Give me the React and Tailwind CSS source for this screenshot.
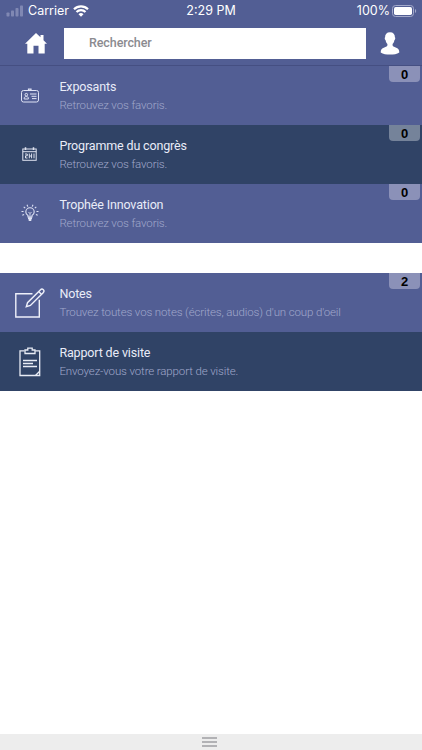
import React from 'react';

const BadgeIcon = () => (
  <svg className="w-[20px] h-[16px]" viewBox="0 0 20 16" fill="none" stroke="#dfe3f5" strokeWidth="1">
    <rect x="1.5" y="2.5" width="17" height="11.500" rx="2" />
    <path d="M8.500 3V1.200h2.500V3" strokeWidth="1.200" />
    <circle cx="6.300" cy="6.700" r="1.300" />
    <path d="M4.200 11v-.8c0-1 .8-1.600 2.100-1.600s2.100.6 2.100 1.600v.8z" />
    <path d="M10 6h6.500M11.500 8.300h5M12 10.600h4.500" />
  </svg>
);

const CalendarIcon = () => (
  <svg className="mb-[2px] w-[15px] h-[14px]" viewBox="0 0 15 14" fill="none" stroke="#dfe3f0" strokeWidth="1">
    <rect x="0.800" y="2" width="13.400" height="11.300" />
    <path d="M0.800 4.700h13.400" />
    <path d="M3.500 0.300v2.700M11.500 0.300v2.700" strokeWidth="1.500" />
    <path d="M3 7h2.300v1.800H3.500v2.200h2M7.300 6.500v4.800M9.600 6.500v4.800M12 6.500v4.800M7.300 9h2.300" />
  </svg>
);

const BulbIcon = () => (
  <svg className="mb-[2px] w-[18px] h-[18px]" viewBox="0 0 18 18" fill="none" stroke="#dfe3f5" strokeWidth="1.100">
    <path d="M7 13v-1.500C5.600 10.600 4.800 9.500 4.800 8a4.200 4.200 0 0 1 8.400 0c0 1.500-.8 2.600-2.200 3.500V13z" />
    <path d="M7.500 8l1 1.200h1l1-1.200M9 9.300V13" strokeWidth="0.800" />
    <path d="M7 14.300h4M7.700 16h2.600" strokeWidth="1.900" />
    <path d="M6.800 2.600L6 .7M11.200 2.600L12 .7M4.200 4.200L2.700 2.800M13.800 4.200l1.500-1.400M.5 7.500h2M15.500 7.500h2M1.300 11.200l1.800-.8M16.700 11.200l-1.800-.8" />
  </svg>
);

const NoteIcon = () => (
  <svg className="w-[30px] h-[30px]" viewBox="0 0 30 30" fill="none" stroke="#eef0fa" strokeWidth="1.400">
    <path d="M17.500 5.700H.8v23.300h23.500V11.800" />
    <path d="M11.300 18.700l1.200-4L25.300 1.900c1.100-1.100 2.200-1 3.100-.2.800.9.800 2-.2 3L15.400 17.500zM23.700 3.500l2.900 2.900" />
  </svg>
);

const ClipboardIcon = () => (
  <svg className="w-[22px] h-[30px]" viewBox="0 0 22 30" fill="none" stroke="#e8ecf5" strokeWidth="1.300">
    <path d="M5.500 3.800H1v24.700h19.700V3.800h-4.500" />
    <path d="M6 6.500V3h2.800V1.200h4.400V3H16v3.500z" />
    <path d="M4 13.500h14M4 16.500h10M4 19.500h14" />
    <path d="M16.500 28.500l4.200-4.200" />
  </svg>
);

const groups = [
  [
    { title: 'Exposants', text: 'Retrouvez vos favoris.', count: 0, Icon: BadgeIcon, color: 'bg-[#525e94]', badge: 'bg-[#8b91b8]' },
    { title: 'Programme du congrès', text: 'Retrouvez vos favoris.', count: 0, Icon: CalendarIcon, color: 'bg-[#304366]', badge: 'bg-[#75839a]' },
    { title: 'Trophée Innovation', text: 'Retrouvez vos favoris.', count: 0, Icon: BulbIcon, color: 'bg-[#525e94]', badge: 'bg-[#8b91b8]' },
  ],
  [
    { title: 'Notes', text: "Trouvez toutes vos notes (écrites, audios) d'un coup d'oeil", count: 2, Icon: NoteIcon, color: 'bg-[#525e94]', badge: 'bg-[#8b91b8]' },
    { title: 'Rapport de visite', text: 'Envoyez-vous votre rapport de visite.', Icon: ClipboardIcon, color: 'bg-[#304366]' },
  ],
];

const Row = ({ item }) => {
  const { title, text, count, Icon, color, badge } = item;

  return (
    <div className={`relative flex h-[59px] ${color}`}>
      <div className="flex w-[59px] shrink-0 items-center justify-center">
        <Icon />
      </div>
      <div className="pt-[12px] pl-[0.400px] whitespace-nowrap">
        <div className="text-[12.500px] leading-[17px] tracking-[-0.150px] text-[#e9ecf8]">{title}</div>
        <div className="mt-[2px] text-[11.500px] leading-[16px] font-light tracking-[-0.130px] text-[#a0a8cb]">{text}</div>
      </div>
      {count !== undefined && (
        <span className={`absolute top-0 right-[2px] flex h-[16px] w-[31px] items-center justify-center rounded-b-[4px] pt-px font-['Liberation_Sans',sans-serif] text-[13px] font-bold text-black ${badge}`}>
          {count}
        </span>
      )}
    </div>
  );
};

const StatusBar = () => (
  <div className="grid h-[20px] grid-cols-3 items-center font-['Inter',sans-serif] text-[12.500px] leading-[20px] text-white">
    <div className="flex items-center pl-[6px]">
      <svg className="w-[18px] h-[12px]" viewBox="0 0 18 12" fill="#8088b3">
        <rect x="0.500" y="7.500" width="3" height="4" rx="0.700" />
        <rect x="5" y="5.500" width="3" height="6" rx="0.700" />
        <rect x="9.500" y="3" width="3" height="8.500" rx="0.700" />
        <rect x="14" y="0.500" width="3" height="11" rx="0.700" />
      </svg>
      <span className="ml-[4px] pt-px">Carrier</span>
      <svg className="ml-[4px] w-[16px] h-[12px]" viewBox="0 0 16 12" fill="none" stroke="white" strokeWidth="2.200">
        <path d="M1 4.300a10 10 0 0 1 14 0M3.500 7a6.400 6.400 0 0 1 9 0" />
        <path d="M8 11.700L5.500 9.200a3.500 3.500 0 0 1 5 0z" fill="white" stroke="none" />
      </svg>
    </div>
    <div className="pt-px text-center">2:29 PM</div>
    <div className="flex items-center justify-end pr-[5px]">
      <span className="pt-px">100%</span>
      <svg className="ml-[2px] w-[25px] h-[12px]" viewBox="0 0 25 12">
        <rect x="0.500" y="0.500" width="21" height="11" rx="3" fill="none" stroke="#a4aacb" />
        <rect x="2" y="2" width="18" height="8" rx="1.700" fill="white" />
        <path d="M23 4c1.600.5 1.600 3.500 0 4z" fill="#a4aacb" />
      </svg>
    </div>
  </div>
);

const App = () => {
  return (
    <div className="flex h-[750px] w-[422px] flex-col overflow-hidden bg-white font-['Roboto',sans-serif]">
      {/* Header */}
      <header className="h-[66px] shrink-0 border-b border-[#454f82] bg-[#525e94]">
        <StatusBar />
        <div className="flex items-center pt-[8px]">
          <div className="flex w-[64px] justify-end pr-[17px]">
            <svg className="w-[22px] h-[21px]" viewBox="0 0 22 21" fill="white">
              <path d="M11 0L0 10.700h2.300V20.500h6.200v-7.800h5v7.800h6.200v-9.800H22l-3.500-3.500V2h-3v2.300z" />
            </svg>
          </div>
          <input
            type="text"
            placeholder="Rechercher"
            className="h-[31px] w-[302px] bg-white pb-[3px] pl-[25px] text-[12.500px] font-medium tracking-[-0.100px] outline-none placeholder:text-[#8b8b90]"
          />
          <svg className="ml-[14px] w-[20px] h-[23px]" viewBox="0 0 20 23" fill="white">
            <path d="M10 .3c3.300 0 5 2 4.900 5 .6.300.5 2.200-.5 2.900-.3 1.700-.9 2.800-1.800 3.700-.3 2 .4 2.600 3.100 3.500 2.500.9 3.700 2.300 3.600 5C17 22 13.600 22.600 10 22.600S3 22 .7 20.400c-.1-2.700 1.100-4.100 3.600-5 2.700-.9 3.400-1.500 3.100-3.500-.9-.9-1.500-2-1.800-3.700-1-.7-1.100-2.600-.5-2.900-.1-3 1.600-5 4.900-5z" />
          </svg>
        </div>
      </header>

      {/* Lists */}
      <main className="flex flex-1 flex-col gap-[30px]">
        {groups.map((group, index) => (
          <div key={index}>
            {group.map(item => (
              <Row key={item.title} item={item} />
            ))}
          </div>
        ))}
      </main>

      {/* Drawer handle */}
      <footer className="flex h-[16px] shrink-0 flex-col items-center gap-[2px] bg-[#ededed] pt-[3px] pr-[3px]">
        <div className="h-[2px] w-[15px] bg-[#b2b2b5]"></div>
        <div className="h-[2px] w-[15px] bg-[#b2b2b5]"></div>
        <div className="h-[2px] w-[15px] bg-[#b2b2b5]"></div>
      </footer>
    </div>
  );
};

export default App;
